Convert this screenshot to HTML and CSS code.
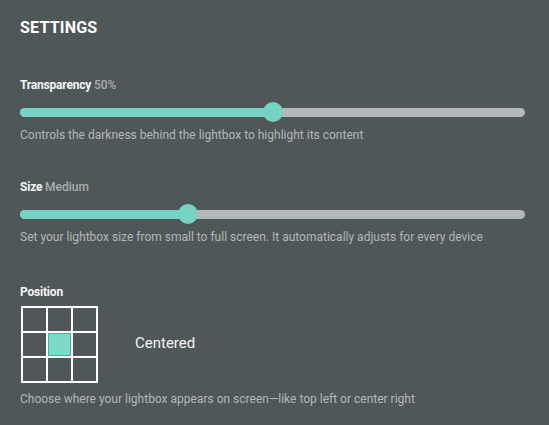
FILE: index.html
```html
<!DOCTYPE html>
<html>
<head>
<meta charset="utf-8">
<link rel="stylesheet" href="styles.css">
</head>
<body>
<div class="panel">
  <h1 class="title">SETTINGS</h1>

  <section class="setting">
    <div class="label">Transparency <span class="value">50%</span></div>
    <div class="slider">
      <div class="track">
        <div class="fill" style="width: 50%"></div>
      </div>
      <div class="thumb" style="left: 50%"></div>
    </div>
    <p class="desc">Controls the darkness behind the lightbox to highlight its content</p>
  </section>

  <section class="setting">
    <div class="label">Size <span class="value">Medium</span></div>
    <div class="slider">
      <div class="track">
        <div class="fill" style="width: 33.3%"></div>
      </div>
      <div class="thumb" style="left: 33.3%"></div>
    </div>
    <p class="desc">Set your lightbox size from small to full screen. It automatically adjusts for every device</p>
  </section>

  <section class="setting position">
    <div class="label">Position</div>
    <div class="pos-row">
      <div class="grid">
        <span class="cell"></span><span class="cell"></span><span class="cell"></span>
        <span class="cell"></span><span class="cell active"></span><span class="cell"></span>
        <span class="cell"></span><span class="cell"></span><span class="cell"></span>
      </div>
      <div class="pos-name">Centered</div>
    </div>
    <p class="desc">Choose where your lightbox appears on screen—like top left or center right</p>
  </section>
</div>
</body>
</html>
```

FILE: styles.css
```css
html, body {
  margin: 0;
  padding: 0;
}

body {
  background: #4f5759;
  font-family: Roboto, "Liberation Sans", Arial, sans-serif;
  color: #f2f2f2;
  width: 549px;
  height: 425px;
  overflow: hidden;
}

.panel {
  padding: 18px 24px 0 20px;
}

.title {
  margin: 0;
  font-size: 16px;
  line-height: 19px;
  font-weight: 700;
  letter-spacing: 0.2px;
  color: #ffffff;
}

.setting {
  margin-top: 41px;
}

.setting + .setting {
  margin-top: 38px;
}

.setting.position {
  margin-top: 41px;
}

.label {
  font-size: 12px;
  line-height: 14px;
  font-weight: 700;
  color: #f4f4f4;
  letter-spacing: -0.2px;
}

.value {
  font-weight: 500;
  color: #a9aeaf;
  letter-spacing: 0;
}

.slider {
  position: relative;
  height: 20px;
  margin-top: 10px;
  display: flex;
  align-items: center;
}

.track {
  flex: 1;
  height: 9px;
  border-radius: 5px;
  background: #b3b8b8;
  overflow: hidden;
}

.fill {
  height: 100%;
  background: #76d3c4;
  border-radius: 5px 0 0 5px;
}

.thumb {
  position: absolute;
  top: 0;
  width: 20px;
  height: 20px;
  margin-left: -10px;
  border-radius: 50%;
  background: #76d3c4;
}

.desc {
  margin: 6px 0 0 0;
  font-size: 12px;
  line-height: 14px;
  color: #b2b7b8;
}

.pos-row {
  display: flex;
  align-items: center;
  margin-top: 7px;
}

.grid {
  display: grid;
  grid-template-columns: repeat(3, 23px);
  grid-template-rows: repeat(3, 23px);
  gap: 2px;
  padding: 2px;
  background: #ffffff;
  margin-left: 1px;
}

.cell {
  background: #4f5759;
}

.cell.active {
  background: #7dd8c8;
  box-shadow: inset 0 0 0 1px #3cb3a3;
}

.pos-name {
  margin-left: 37px;
  margin-bottom: 3px;
  font-size: 15px;
  line-height: 17px;
  color: #f4f4f4;
}

.position .desc {
  margin-top: 9px;
}
```
